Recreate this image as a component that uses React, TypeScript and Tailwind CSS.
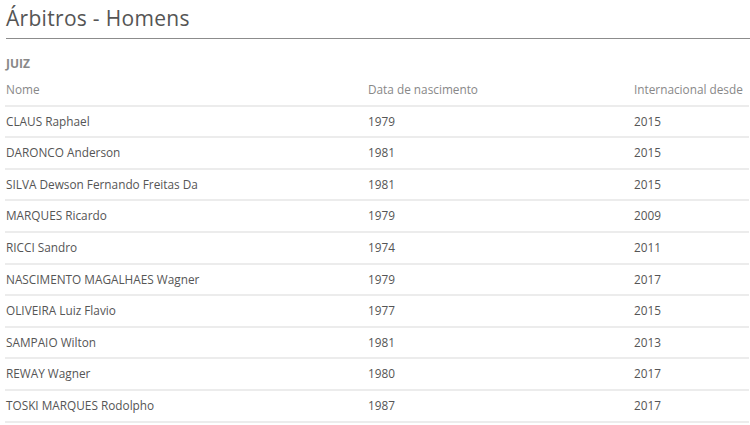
import React from "react";

type Referee = {
  name: string;
  born: string;
  since: string;
};

const referees: Referee[] = [
  { name: "CLAUS Raphael", born: "1979", since: "2015" },
  { name: "DARONCO Anderson", born: "1981", since: "2015" },
  { name: "SILVA Dewson Fernando Freitas Da", born: "1981", since: "2015" },
  { name: "MARQUES Ricardo", born: "1979", since: "2009" },
  { name: "RICCI Sandro", born: "1974", since: "2011" },
  { name: "NASCIMENTO MAGALHAES Wagner", born: "1979", since: "2017" },
  { name: "OLIVEIRA Luiz Flavio", born: "1977", since: "2015" },
  { name: "SAMPAIO Wilton", born: "1981", since: "2013" },
  { name: "REWAY Wagner", born: "1980", since: "2017" },
  { name: "TOSKI MARQUES Rodolpho", born: "1987", since: "2017" },
];

const Row = ({ cells, head }: { cells: string[]; head?: boolean }) => (
  <div
    className={`grid grid-cols-[362px_266px_1fr] items-center h-[31.6px] border-b-2 border-[#ececec] pl-[1px] text-[11.8px] ${
      head ? "text-[#888]" : "text-[#555]"
    }`}
  >
    {cells.map((c, i) => (
      <span key={i} className="whitespace-nowrap">{c}</span>
    ))}
  </div>
);

const App = () => {
  return (
    <div className="w-[750px] h-[425px] bg-white overflow-hidden font-['Open_Sans',sans-serif]">
      <div className="ml-[6px] pt-[4px]">
        <h1 className="text-[21px] leading-[28px] tracking-[0.3px] text-[#555] font-normal pb-[6px] border-b border-[#8c8c8c]">
          Árbitros - Homens
        </h1>
      </div>
      <div className="ml-[5px] w-[744px]">
        <p className="mt-[16px] pl-[1px] text-[12px] leading-[17px] font-bold text-[#888]">JUIZ</p>
        <div className="mt-[3px]">
          <Row head cells={["Nome", "Data de nascimento", "Internacional desde"]} />
          {referees.map(r => (
            <Row key={r.name} cells={[r.name, r.born, r.since]} />
          ))}
        </div>
      </div>
    </div>
  );
};

export default App;
